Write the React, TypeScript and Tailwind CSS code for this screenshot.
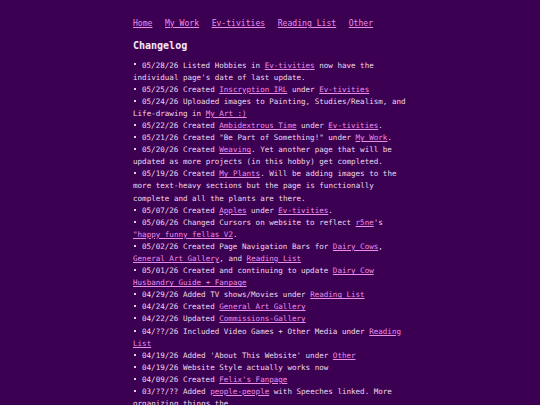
import React from 'react';

type Part = string | { link: string };

const entries: Part[][] = [
  ['05/28/26 Listed Hobbies in ', { link: 'Ev-tivities' }, ' now have the individual page\'s date of last update.'],
  ['05/25/26 Created ', { link: 'Inscryption IRL' }, ' under ', { link: 'Ev-tivities' }],
  ['05/24/26 Uploaded images to Painting, Studies/Realism, and Life-drawing in ', { link: 'My Art :)' }],
  ['05/22/26 Created ', { link: 'Ambidextrous Time' }, ' under ', { link: 'Ev-tivities' }, '.'],
  ['05/21/26 Created "Be Part of Something!" under ', { link: 'My Work' }, '.'],
  ['05/20/26 Created ', { link: 'Weaving' }, '. Yet another page that will be updated as more projects (in this hobby) get completed.'],
  ['05/19/26 Created ', { link: 'My Plants' }, '. Will be adding images to the more text-heavy sections but the page is functionally complete and all the plants are there.'],
  ['05/07/26 Created ', { link: 'Apples' }, ' under ', { link: 'Ev-tivities' }, '.'],
  ['05/06/26 Changed Cursors on website to reflect ', { link: 'r5ne' }, '\'s ', { link: '"happy funny fellas V2' }, '.'],
  ['05/02/26 Created Page Navigation Bars for ', { link: 'Dairy Cows' }, ', ', { link: 'General Art Gallery' }, ', and ', { link: 'Reading List' }],
  ['05/01/26 Created and continuing to update ', { link: 'Dairy Cow Husbandry Guide + Fanpage' }],
  ['04/29/26 Added TV shows/Movies under ', { link: 'Reading List' }],
  ['04/24/26 Created ', { link: 'General Art Gallery' }],
  ['04/22/26 Updated ', { link: 'Commissions-Gallery' }],
  ['04/??/26 Included Video Games + Other Media under ', { link: 'Reading List' }],
  ['04/19/26 Added \'About This Website\' under ', { link: 'Other' }],
  ['04/19/26 Website Style actually works now'],
  ['04/09/26 Created ', { link: 'Felix\'s Fanpage' }],
  ['03/??/?? Added ', { link: 'people-people' }, ' with Speeches linked. More organizing things the'],
];

const nav = ['Home', 'My Work', 'Ev-tivities', 'Reading List', 'Other'];

export default function App() {
  return (
    <div
      className="h-[405px] overflow-hidden bg-[#3c0052] text-[#efd9ec]"
      style={{ fontFamily: '"DejaVu Sans Mono", "Liberation Mono", monospace' }}
    >
      <div className="w-[274px] mx-auto pt-[17px]">
        <nav className="flex gap-[12.5px] text-[8.1px] leading-[13px]">
          {nav.map((n) => (
            <a key={n} className="text-[#ec8ce8] underline">
              {n}
            </a>
          ))}
        </nav>
        <h1 className="mt-[8px] text-[10px] leading-[16px] font-bold text-[#f7e8f5]">Changelog</h1>
        <ul className="mt-[5.5px] text-[7.55px] leading-[12.1px]">
          {entries.map((parts, i) => (
            <li key={i}>
              <span className="inline-block w-[9px] relative top-[-1px]">
                <span className="inline-block w-[2px] h-[2px] bg-[#e6cce3] ml-[1px] align-middle" />
              </span>
              {parts.map((p, j) =>
                typeof p === 'string' ? (
                  <span key={j}>{p}</span>
                ) : (
                  <a key={j} className="text-[#ec8ce8] underline">
                    {p.link}
                  </a>
                )
              )}
            </li>
          ))}
        </ul>
      </div>
    </div>
  );
}
